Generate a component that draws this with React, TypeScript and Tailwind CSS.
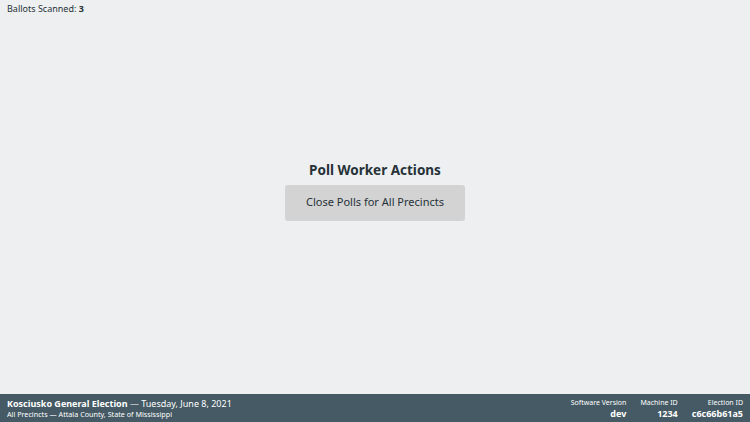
export default function App() {
  return (
    <div className="flex h-[422px] w-[750px] flex-col bg-[#edeff0] font-['Noto_Sans',sans-serif] text-[#263238]">
      <div className="h-[20px] px-[7px] pt-[2px] text-[9px] leading-[14px]">
        Ballots Scanned: <span className="font-bold">3</span>
      </div>

      <main className="flex flex-1 flex-col items-center justify-center pb-[34px]">
        <h1 className="mb-[5px] text-[13.5px] font-bold leading-[20px]">Poll Worker Actions</h1>
        <button className="h-[36px] w-[180px] rounded-[3px] bg-[#d3d3d3] text-[11px] text-[#263238]">
          Close Polls for All Precincts
        </button>
      </main>

      <footer className="flex h-[28px] items-center justify-between bg-[#455a64] px-[7px] text-white">
        <div className="leading-none">
          <div className="text-[9px] leading-[12px]">
            <span className="font-bold">Kosciusko General Election</span> — Tuesday, June 8, 2021
          </div>
          <div className="text-[7.2px] leading-[9px]">All Precincts — Attala County, State of Mississippi</div>
        </div>
        <div className="flex gap-[14px] text-right">
          <div>
            <div className="text-[7px] leading-[10px]">Software Version</div>
            <div className="text-[9px] font-bold leading-[11px]">dev</div>
          </div>
          <div>
            <div className="text-[7px] leading-[10px]">Machine ID</div>
            <div className="text-[9px] font-bold leading-[11px]">1234</div>
          </div>
          <div>
            <div className="text-[7px] leading-[10px]">Election ID</div>
            <div className="text-[9px] font-bold leading-[11px]">c6c66b61a5</div>
          </div>
        </div>
      </footer>
    </div>
  )
}
